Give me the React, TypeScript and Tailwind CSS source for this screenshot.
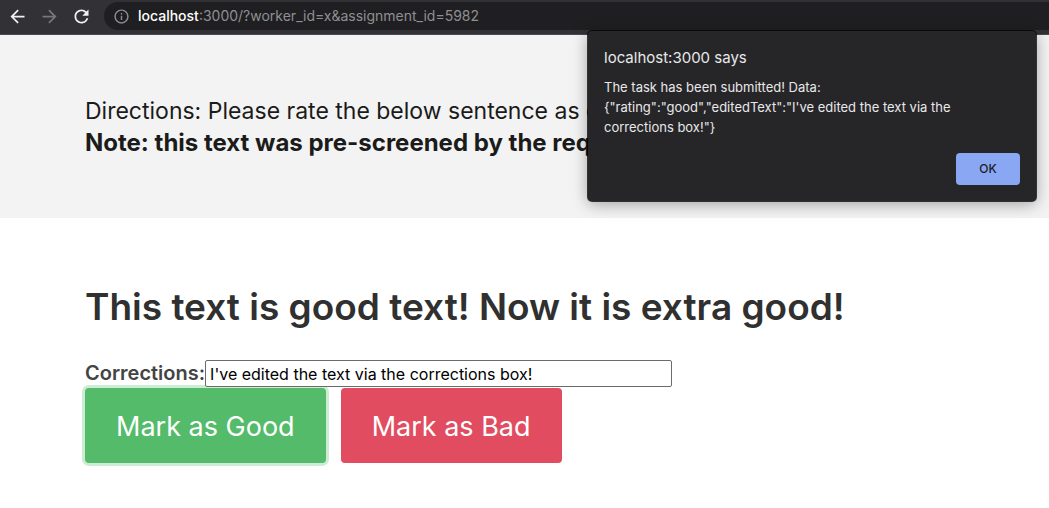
import { useState } from "react";
import { MdArrowBack, MdArrowForward, MdInfoOutline, MdRefresh } from "react-icons/md";

function BrowserBar() {
  return (
    <nav
      aria-label="Browser"
      className="flex h-[35px] items-start border-b border-[#4a494e] bg-[#323136] pt-0.5"
    >
      <div className="flex h-7 items-center gap-[11px] pl-[7px]">
        <button type="button" aria-label="Back" className="text-[#f1f1f2]">
          <MdArrowBack size={21} />
        </button>
        <button type="button" aria-label="Forward" className="text-[#77767a]">
          <MdArrowForward size={21} />
        </button>
        <button type="button" aria-label="Reload" className="text-[#f1f1f2]">
          <MdRefresh size={21} />
        </button>
      </div>
      <div className="ml-3 flex h-7 flex-1 items-center gap-2 rounded-l-full bg-[#1f1f21] pl-[9px] text-sm text-[#8f8f93]">
        <MdInfoOutline size={17} />
        <span>
          <span className="font-medium text-white">localhost</span>
          :3000/?worker_id=x&amp;assignment_id=5982
        </span>
      </div>
    </nav>
  );
}

function AlertDialog({ onClose }: { onClose: () => void }) {
  return (
    <div
      role="alertdialog"
      aria-labelledby="alert-title"
      aria-describedby="alert-message"
      className="absolute top-[31px] right-[13px] z-20 flex w-[448px] flex-col rounded bg-[#262628] px-4 pt-[17px] pb-4 text-[#e8e8ea] shadow-[0_3px_16px_rgba(0,0,0,0.35),0_0_0_1px_rgba(0,0,0,0.75)]"
    >
      <h2 id="alert-title" className="text-[15px] leading-5">
        localhost:3000 says
      </h2>
      <p id="alert-message" className="mt-[9px] text-[13px] leading-5">
        The task has been submitted! Data:
        <br />
        {'{"rating":"good","editedText":"I\'ve edited the text via the'}
        <br />
        {'corrections box!"}'}
      </p>
      <button
        type="button"
        onClick={onClose}
        className="mt-4 h-8 w-16 self-end rounded bg-[#8aa7f3] text-xs font-medium text-[#202124]"
      >
        OK
      </button>
    </div>
  );
}

export default function App() {
  const [open, setOpen] = useState(true);
  const [text, setText] = useState("I've edited the text via the corrections box!");

  return (
    <div className="relative min-h-screen overflow-hidden bg-white font-['Inter',sans-serif]">
      <BrowserBar />
      <header className="bg-[#f3f3f3] px-[85px] pt-[61px] pb-[60px] text-[#1b1b1b]">
        <p className="text-[23px] leading-[31px]">
          Directions: Please rate the below sentence as good or bad.
        </p>
        <p className="text-2xl leading-[31px] font-bold">
          Note: this text was pre-screened by the requester.
        </p>
      </header>
      <main className="px-[85px] pt-16">
        <h1 className="text-[37px] leading-[50px] font-semibold text-[#303030]">
          This text is good text! Now it is extra good!
        </h1>
        <div className="mt-[27px] mb-px flex items-center">
          <label htmlFor="corrections" className="text-xl leading-7 font-semibold text-[#444444]">
            Corrections:
          </label>
          <input
            id="corrections"
            type="text"
            value={text}
            onChange={(e) => setText(e.target.value)}
            className="relative h-[27px] w-[467px] rounded-xs border border-[#6b6b6b] bg-white px-1 pt-0.5 text-base text-black"
          />
        </div>
        <div className="flex gap-[15px]">
          <button
            type="button"
            className="h-[75px] rounded bg-[#53bb69] px-[31px] pt-1 text-[27px] text-white ring-[3px] ring-[#cdecd4]"
          >
            Mark as Good
          </button>
          <button
            type="button"
            className="h-[75px] rounded bg-[#e14c60] px-[31px] pt-1 text-[27px] text-white"
          >
            Mark as Bad
          </button>
        </div>
      </main>
      {open && <AlertDialog onClose={() => setOpen(false)} />}
    </div>
  );
}
